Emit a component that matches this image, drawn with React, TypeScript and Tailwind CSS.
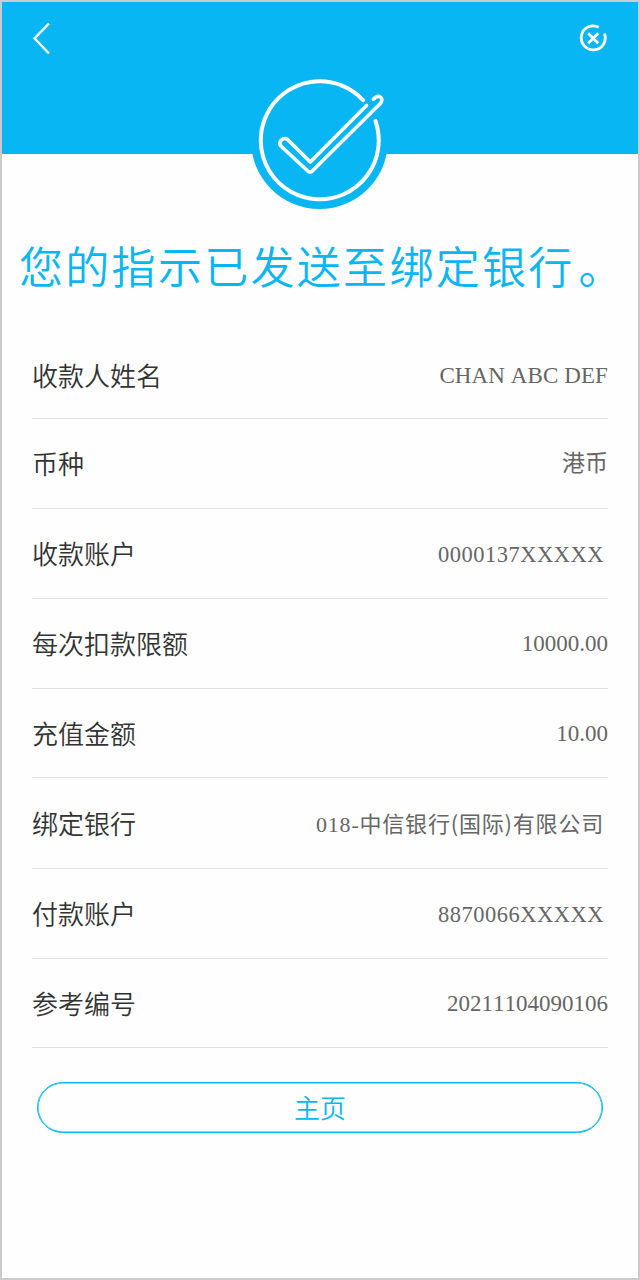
import React from "react";

interface RowProps {
  label: string;
  value: React.ReactNode;
  className: string;
  valueClass?: string;
}

const rows: RowProps[] = [
  { label: "收款人姓名", value: "CHAN ABC DEF", className: "h-[86px]", valueClass: "text-[23px] tracking-[0.1px]" },
  { label: "币种", value: "港币", className: "h-[90px]" },
  {
    label: "收款账户",
    value: "0000137XXXXX",
    className: "h-[90px]",
    valueClass: "text-[22.5px] tracking-[0.5px] mr-1 pt-[4px]",
  },
  { label: "每次扣款限额", value: "10000.00", className: "h-[90px]" },
  { label: "充值金额", value: "10.00", className: "h-[89px]" },
  {
    label: "绑定银行",
    value: (
      <>
        018-
        <span className="font-['Noto_Sans_CJK_SC',sans-serif]">中信银行(国际)有限公司</span>
      </>
    ),
    className: "h-[91px]",
    valueClass: "text-[22px] tracking-[0.8px] mr-1",
  },
  {
    label: "付款账户",
    value: "8870066XXXXX",
    className: "h-[90px]",
    valueClass: "text-[22.5px] tracking-[0.5px] mr-1 pt-[3px]",
  },
  { label: "参考编号", value: "20211104090106", className: "h-[89px]" },
];

const BackIcon = () => (
  <svg width="20" height="34" viewBox="0 0 20 34" fill="none">
    <path d="M17 2.5L2.5 17.3L17 32.5" stroke="#fff" strokeWidth="2.4" />
  </svg>
);

const CloseIcon = () => (
  <svg width="28" height="28" viewBox="0 0 28 28" fill="none">
    <path
      d="M19.7 3.2A12 12 0 1 0 25.4 9.5M9.2 9.2L19.2 19.2M19.2 9.2L9.2 19.2"
      stroke="#fff"
      strokeWidth="2.8"
    />
  </svg>
);

const CheckIcon = () => (
  <svg width="160" height="155" viewBox="0 0 160 155" fill="none">
    <circle cx="79.5" cy="76.5" r="68.5" fill="#08b6f4" />
    <g stroke="#fff" strokeWidth="4" strokeLinecap="round" strokeLinejoin="round">
      <path d="M123 36.2A59 59 0 1 0 135.5 57" />
      <path
        d="M126.5 41.5L70.3 98L47 75A5 5 0 0 0 40.3 81.5L67.5 106.8Q70 109 72.5 106.8L140.5 39.3C144.5 34.5 139 29 133.3 35.3"
        strokeWidth="3.6"
      />
    </g>
  </svg>
);

const Row = ({ label, value, className, valueClass }: RowProps) => (
  <div className={`flex items-center justify-between border-b border-[#e2e2e2] ${className}`}>
    <span className="pb-[1px] text-[26px] leading-none font-[350] text-[#333]">{label}</span>
    <span
      className={`leading-none text-[#666] [font-kerning:none] ${valueClass ?? "text-[23px]"} font-['Liberation_Serif','Noto_Sans_CJK_SC',serif]`}
    >
      {value}
    </span>
  </div>
);

const App = () => {
  return (
    <div
      lang="zh-CN"
      className="flex h-[1280px] w-[640px] flex-col overflow-hidden border-2 border-[#ccc] bg-[#fefefe] font-['Noto_Sans_CJK_SC',sans-serif]"
    >
      <header className="relative h-[152px] shrink-0 bg-[#08b6f4]">
        <div className="flex items-start justify-between pt-[19px] pr-[31px] pl-[30px]">
          <button type="button" aria-label="返回">
            <BackIcon />
          </button>
          <button type="button" aria-label="关闭" className="pt-[3px]">
            <CloseIcon />
          </button>
        </div>
        <div className="absolute top-[62px] left-[238px]">
          <CheckIcon />
        </div>
      </header>
      <h1 className="mt-[86px] ml-[17px] text-[44px] leading-[50px] font-[350] tracking-[2.3px] whitespace-nowrap text-[#08b6f4]">
        您的指示已发送至绑定银行<span className="pl-1">。</span>
      </h1>
      <main className="mx-[30px] mt-[43px]">
        {rows.map((row) => (
          <Row key={row.label} {...row} />
        ))}
      </main>
      <button
        type="button"
        className="mx-[35px] mt-[34px] flex h-[51px] shrink-0 items-center justify-center rounded-full border border-[#08b6f4] pb-[2px] text-[26px] leading-none font-[350] text-[#08b6f4] shadow-[inset_0_0_0_0.6px_#08b6f4]"
      >
        主页
      </button>
    </div>
  );
};

export default App;
